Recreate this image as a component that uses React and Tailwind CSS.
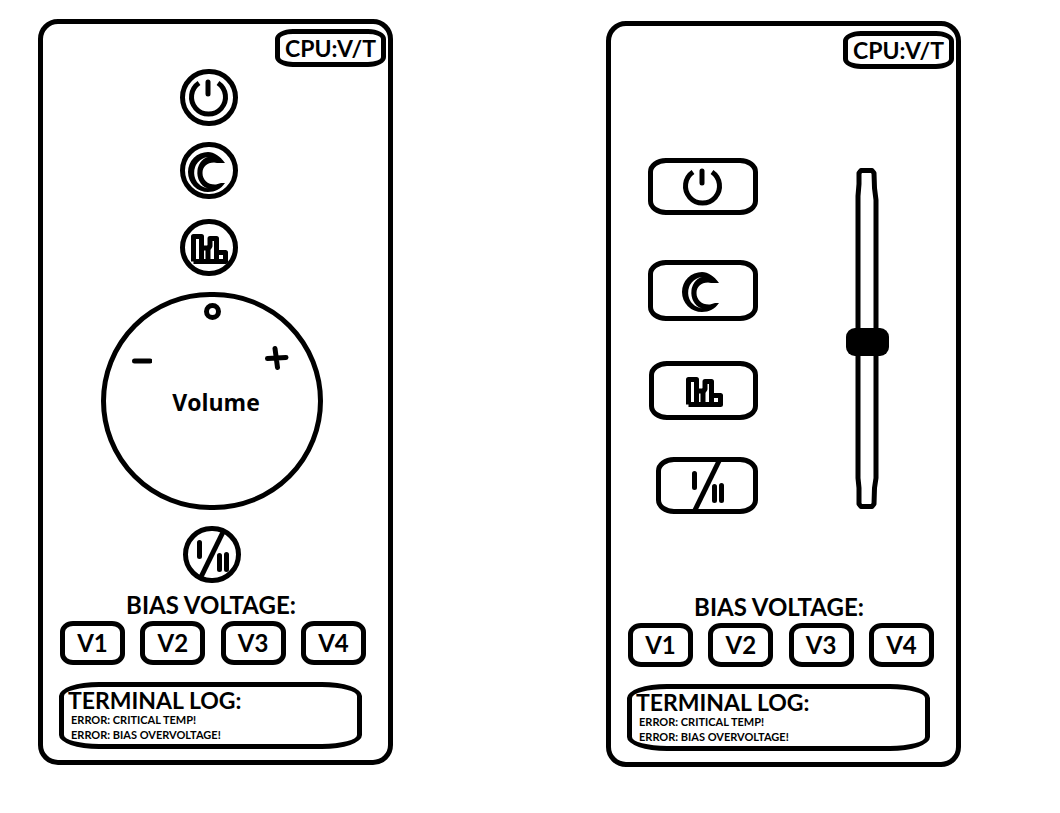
import React from "react";

const stroke = {
  fill: "none",
  stroke: "currentColor",
  strokeWidth: 5,
  strokeLinejoin: "round",
};

function PowerIcon() {
  return (
    <svg width="58" height="57" viewBox="0 0 58 57" aria-hidden="true">
      <g {...stroke}>
        <path d="M38 14 A17 17 0 1 1 19 14" />
        <path d="M28 13 V25" strokeLinecap="round" />
      </g>
    </svg>
  );
}

function MoonIcon() {
  return (
    <svg width="58" height="57" viewBox="0 0 58 57" aria-hidden="true">
      <path
        d="M45 21 C40 14 34 10 28 10 A20 20 0 0 0 28 50 C35 50 41 47 45 41 H41 L36 42.5 C28 43 22.5 38 22.5 31 C22.5 25 27 20.5 34 20.5 L37 21 Z"
        fill="currentColor"
      />
      <path d="M28 15 A15.5 15.8 0 0 0 29 46.5 A13.5 16 0 0 1 28 15 Z" fill="#fff" />
    </svg>
  );
}

function BarsIcon() {
  return (
    <svg width="58" height="57" viewBox="0 0 58 57" aria-hidden="true">
      <g {...stroke}>
        <path d="M13.5 42.5 V17.5 H21.5 V42.5" />
        <path d="M21.5 29 H28" />
        <path d="M28 42.5 V30 L30 27 V19.5 H36.5 V42.5" />
        <path d="M36.5 33.5 H45.5 V42.5 H13.5" />
      </g>
    </svg>
  );
}

function ModeIcon() {
  return (
    <svg width="58" height="57" viewBox="0 0 58 57" aria-hidden="true">
      <g {...stroke}>
        <path d="M41 4 L17 53" />
        <path d="M16.5 16.5 V30.5 M36.5 29.5 V43.5 M43.5 28.5 V43.5" strokeLinecap="round" />
      </g>
    </svg>
  );
}

function RoundButton({ label, className = "", children }) {
  return (
    <button
      type="button"
      aria-label={label}
      className={`grid h-[57px] w-[58px] place-content-center rounded-full border-5 border-black ${className}`}
    >
      {children}
    </button>
  );
}

function WideButton({ label, className = "", children }) {
  return (
    <button
      type="button"
      aria-label={label}
      className={`grid place-content-center rounded-[18px/14px] border-5 border-black ${className}`}
    >
      {children}
    </button>
  );
}

function VolumeKnob() {
  return (
    <div
      role="group"
      aria-labelledby="knob-label"
      className="mt-4 flex h-[218px] w-[222px] flex-col items-center rounded-full border-5 border-black pt-1.5"
    >
      <span className="size-[17px] rounded-full border-[5px] border-black" />
      <div className="mt-[26px] flex w-full items-center justify-between pr-[29px] pl-6">
        <button type="button" aria-label="Volume down">
          <svg width="22" height="24" viewBox="0 0 22 24" aria-hidden="true">
            <path d="M4.5 15 H20" {...stroke} strokeLinecap="round" />
          </svg>
        </button>
        <button type="button" aria-label="Volume up">
          <svg width="24" height="24" viewBox="0 0 24 24" aria-hidden="true">
            <path d="M2.5 12.5 L21 11.5 M10 2.5 L12.5 21.5" {...stroke} strokeLinecap="round" />
          </svg>
        </button>
      </div>
      <span
        id="knob-label"
        className="mt-3.5 pl-2 font-['Open_Sans','Noto_Sans',sans-serif] text-[23px] leading-9 font-bold"
      >
        Volume
      </span>
    </div>
  );
}

function VolumeSlider() {
  return (
    <div className="grid h-[341px] w-[43px] justify-items-center">
      <svg className="col-start-1 row-start-1" width="27" height="341" viewBox="0 0 27 341" aria-hidden="true">
        <path
          d="M5 5 L7 2.5 H18 L20 5 L20.5 20 L22 32 V310 L20.5 320 L20 336 L18 338.5 H7 L5 336 V320 L4 310 V28 L5 16 Z"
          {...stroke}
        />
      </svg>
      <input
        type="range"
        aria-label="Volume"
        min="0"
        max="100"
        defaultValue="49"
        className="col-start-1 row-start-1 h-[341px] w-[43px] appearance-none bg-transparent [direction:rtl] [writing-mode:vertical-lr] [&::-webkit-slider-thumb]:h-7 [&::-webkit-slider-thumb]:w-[43px] [&::-webkit-slider-thumb]:appearance-none [&::-webkit-slider-thumb]:rounded-[9px] [&::-webkit-slider-thumb]:bg-black"
      />
    </div>
  );
}

function Panel({ label, children }) {
  return (
    <section
      aria-label={label}
      className="flex h-[746px] flex-col rounded-[20px] border-5 border-black pt-[5px] pb-[11px]"
    >
      <button
        type="button"
        className="mr-0.5 h-[38px] w-[111px] self-end rounded-[18px/10px] border-5 border-black text-center text-[23px] leading-[26px] font-bold whitespace-nowrap"
      >
        CPU:V/T
      </button>
      {children}
      <div className="mt-auto pr-[22px] pl-[17px]">
        <h2 className="pr-1 text-center text-2xl leading-7 font-bold">BIAS VOLTAGE:</h2>
        <div className="mt-0.5 flex justify-between">
          {["V1", "V2", "V3", "V4"].map((name) => (
            <button
              key={name}
              type="button"
              className="h-11 w-[65px] rounded-[13px/11px] border-5 border-black text-2xl leading-7 font-bold"
            >
              {name}
            </button>
          ))}
        </div>
      </div>
      <div className="mt-[17px] mr-[26px] ml-4 h-[67px] rounded-[40px/14px] border-5 border-black pt-px pl-1 font-bold">
        <h2 className="text-[23px] leading-6 whitespace-nowrap">TERMINAL LOG:</h2>
        <ul className="pl-[3px] text-[11px] leading-[15px]">
          <li>ERROR: CRITICAL TEMP!</li>
          <li>ERROR: BIAS OVERVOLTAGE!</li>
        </ul>
      </div>
    </section>
  );
}

export default function App() {
  return (
    <main className="min-h-screen bg-white font-[Lato,'Noto_Sans',sans-serif] text-black">
      <div className="grid min-w-[1000px] grid-cols-2 gap-[213px] pr-[99px] pl-[38px]">
        <div className="pt-[19px]">
          <Panel label="Dial remote">
            <div className="mt-0.5 flex flex-col items-center pr-[7px]">
              <div className="flex flex-col items-center pr-1.5">
                <RoundButton label="Power">
                  <PowerIcon />
                </RoundButton>
                <RoundButton label="Night mode" className="mt-4">
                  <MoonIcon />
                </RoundButton>
                <RoundButton label="Equalizer" className="mt-5">
                  <BarsIcon />
                </RoundButton>
              </div>
              <VolumeKnob />
              <RoundButton label="Channel mode" className="mt-4">
                <ModeIcon />
              </RoundButton>
            </div>
          </Panel>
        </div>
        <div className="pt-[21px]">
          <Panel label="Slider remote">
            <div className="mt-[89px] flex justify-between pr-[67px] pl-[37px]">
              <div className="flex flex-col items-end">
                <WideButton label="Power" className="h-[57px] w-[110px]">
                  <PowerIcon />
                </WideButton>
                <WideButton label="Night mode" className="mt-[45px] h-[61px] w-[110px]">
                  <MoonIcon />
                </WideButton>
                <WideButton label="Equalizer" className="mt-10 h-[59px] w-[109px]">
                  <BarsIcon />
                </WideButton>
                <WideButton label="Channel mode" className="mt-[37px] h-[57px] w-[102px]">
                  <ModeIcon />
                </WideButton>
              </div>
              <div className="pt-[10px]">
                <VolumeSlider />
              </div>
            </div>
          </Panel>
        </div>
      </div>
    </main>
  );
}
